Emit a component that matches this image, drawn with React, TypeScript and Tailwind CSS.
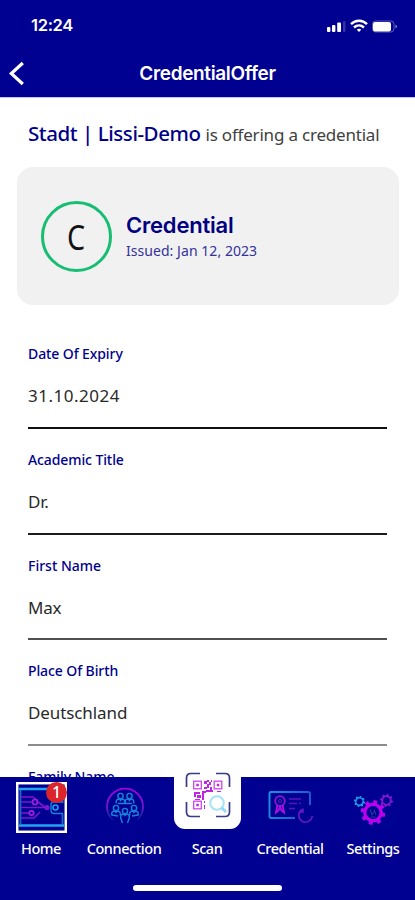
import type { ReactNode } from 'react';
import { cx } from 'class-variance-authority';

interface Field {
  label: string;
  value: string;
  labelClass: string;
  valueClass: string;
  lineClass: string;
}

const fields: Field[] = [
  { label: 'Date Of Expiry', value: '31.10.2024', labelClass: 'tracking-[-0.1px]', valueClass: 'tracking-[0.5px]', lineClass: 'border-[#101010]' },
  { label: 'Academic Title', value: 'Dr.', labelClass: 'tracking-[-0.1px]', valueClass: 'tracking-[-0.2px]', lineClass: 'border-[#1c1c1c]' },
  { label: 'First Name', value: 'Max', labelClass: 'tracking-[0px]', valueClass: 'tracking-[-0.2px]', lineClass: 'border-[#505050]' },
  { label: 'Place Of Birth', value: 'Deutschland', labelClass: 'tracking-[-0.1px]', valueClass: 'tracking-[-0.1px]', lineClass: 'border-[#8c8c8c]' },
  { label: 'Family Name', value: '', labelClass: 'tracking-[-0.1px]', valueClass: '', lineClass: 'border-[#8c8c8c]' },
];

const StatusBar = () => (
  <div className="flex h-[51px] items-center justify-between pl-[31px] pr-[16px]">
    <span className="font-['Inter','Liberation_Sans',sans-serif] text-[16.5px] font-semibold leading-none tracking-[-0.3px]">12:24</span>
    <svg width="73" height="16" viewBox="0 0 73 16" fill="none">
      <rect x="1" y="9" width="3.4" height="5" rx="1" fill="#fff" />
      <rect x="6" y="7" width="3.4" height="7" rx="1" fill="#fff" />
      <rect x="11.2" y="4.5" width="3.8" height="9.5" rx="1" fill="#fff" />
      <rect x="17" y="3" width="2.5" height="11" rx="1" fill="#fff" opacity="0.2" />
      <path d="M25 6.2C29.5 1.6 36.5 1.6 41 6.2M28 9.5C31 6.7 35 6.7 38 9.5" stroke="#fff" strokeWidth="2.4" />
      <path d="M30.8 11.7C32 10.5 34 10.5 35.2 11.7L33 14Z" fill="#fff" />
      <rect x="46.5" y="3" width="21.5" height="11" rx="3.2" stroke="#fff" opacity="0.35" />
      <rect x="47" y="4" width="18" height="9.5" rx="2" fill="#fff" />
      <path d="M69.5 6.5V10.5C71.7 9.5 71.7 7.5 69.5 6.5Z" fill="#fff" opacity="0.5" />
    </svg>
  </div>
);

const Header = () => (
  <header className="h-[97px] shrink-0 bg-[#000091] text-white">
    <StatusBar />
    <div className="grid h-[46px] grid-cols-[40px_1fr_40px] items-center">
      <svg className="ml-[8px]" width="18" height="26" viewBox="0 0 18 26" fill="none">
        <path d="M14.8 2L3.3 12.5L14.8 23" stroke="#fff" strokeWidth="3.2" />
      </svg>
      <h1 className="pt-px text-center font-['Inter','Liberation_Sans',sans-serif] text-[19px] font-semibold tracking-[-0.35px]">CredentialOffer</h1>
    </div>
  </header>
);

const CredentialCard = () => (
  <section className="ml-[17px] flex h-[138px] w-[382px] shrink-0 items-center rounded-[16px] bg-[#f1f1f1] pl-[24px]">
    <div className="flex size-[71px] items-center justify-center rounded-full border-3 border-[#17bd72] text-[35px] leading-none text-[#111]">
      <span className="block scale-x-[0.82]">C</span>
    </div>
    <div className="ml-[14px] pt-px text-[#000080]">
      <h2 className="font-['Inter','Liberation_Sans',sans-serif] text-[22px] font-semibold leading-[27px] tracking-[-0.2px]">Credential</h2>
      <p className="text-[14px] leading-[23px] tracking-[0.05px] text-[#33339a]">Issued: Jan 12, 2023</p>
    </div>
  </section>
);

const FieldRow = ({ label, value, labelClass, valueClass, lineClass }: Field) => (
  <div className={cx('flex h-[105.7px] w-[359px] shrink-0 flex-col border-b-2', lineClass)}>
    <p className={cx('mt-[21px] text-[14px] font-medium leading-[20px] text-[#00008c]', labelClass)}>{label}</p>
    <p className={cx('mt-[20px] text-[17px] leading-[24px] text-[#292929]', valueClass)}>{value}</p>
  </div>
);

const HomeIcon = () => (
  <svg width="51" height="51" viewBox="0 0 51 51" fill="none">
    <rect x="1.2" y="1.2" width="48.6" height="48.6" stroke="#fff" strokeWidth="2.5" />
    <path d="M3 7H48M3 43.5H48" stroke="#20a5f0" strokeWidth="2.5" />
    <path d="M4.5 8V42M46.5 8V21M46.5 32V42" stroke="#1c69c8" strokeWidth="1.8" />
    <path d="M5 15H17L22 19M5 20H16M5 25.5H29M5 31H13M5 36H18L24 30M22 20L29 25" stroke="#7d14d0" strokeWidth="1.6" />
    <circle cx="19" cy="20" r="2.5" stroke="#a51de5" strokeWidth="1.7" />
    <circle cx="15.5" cy="31" r="2.2" stroke="#a51de5" strokeWidth="1.7" />
    <circle cx="31" cy="25.5" r="2.6" fill="#7d18d2" />
    <path d="M47 20H37Q35 20 35 23V28Q35 31.5 38 31.5H47" stroke="#1681d6" strokeWidth="1.4" />
    <circle cx="39.5" cy="25.5" r="2.5" stroke="#169ff0" strokeWidth="1.6" />
  </svg>
);

const Person = ({ x, y }: { x: number; y: number }) => (
  <g transform={`translate(${x} ${y})`}>
    <circle r="2.6" />
    <path d="M-4.3 7.5V6C-4.3 3.8-2.5 3-1 3L0 4.5L1 3C2.5 3 4.3 3.8 4.3 6V7.5" />
  </g>
);

const ConnectionIcon = () => (
  <svg width="40" height="40" viewBox="0 0 40 40" fill="none">
    <defs>
      <linearGradient id="ring" x2="0" y2="1">
        <stop stopColor="#a800e4" />
        <stop offset=".65" stopColor="#6a1cc8" />
        <stop offset="1" stopColor="#234fc2" stopOpacity=".2" />
      </linearGradient>
    </defs>
    <path d="M8 33A18 18 0 1 1 32 33" stroke="url(#ring)" strokeWidth="1.8" />
    <g stroke="#1681db" strokeWidth="1.4">
      <Person x={15.5} y={9} />
      <Person x={24.5} y={9} />
      <Person x={11} y={21} />
      <Person x={29} y={21} />
      <Person x={20} y={24} />
      <path d="M7 28L13 29M33 28L27 29M15.7 31L17.5 36M24.3 31L22.5 36M13 16.5H27" />
    </g>
  </svg>
);

const ScanIcon = () => (
  <svg width="46" height="46" viewBox="0 0 46 46" fill="none">
    <path d="M15 1.5H6Q1.5 1.5 1.5 6V15M31 1.5H40Q44.5 1.5 44.5 6V15M1.5 30V40Q1.5 44.5 6 44.5H15M31 44.5H40Q44.5 44.5 44.5 40V30" stroke="#39398a" strokeWidth="1.7" />
    <g stroke="#d143ef" strokeWidth="1.3">
      <rect x="8.7" y="9.2" width="7.6" height="7.6" />
      <rect x="29.2" y="9.2" width="7.6" height="7.6" />
      <rect x="8.7" y="29.2" width="7.6" height="7.6" />
    </g>
    <g fill="#bf25e2">
      <path d="M11.3 11.8h2.5v2.5h-2.5zM31.8 11.8h2.5v2.5h-2.5zM11.3 31.8h2.5v2.5h-2.5z" />
      <path d="M19 9h3v3h-3zM22 12h2v4h-2zM24 10h2v3h-2zM19 15h3v2h-3zM25 15h2v3h-2zM22 8h2v2h-2zM21 18h7v2h-7zM32 19h4v1h-4zM26 8h1v2h-1z" />
      <path d="M9 20h6v2H9zM9 22h2v3h-2zM12 23h4v3h-4zM17 19h2v9h-2zM10 27h5v1h-5zM19 19h2v2h-2zM19 29h1v2h-1zM19 33h1v4h-1z" />
    </g>
    <circle cx="32" cy="31" r="6.8" stroke="#a5e4f5" strokeWidth="2" />
    <path d="M36.5 35.5L41 40" stroke="#8cdcf3" strokeWidth="2.6" />
  </svg>
);

const CredentialIcon = () => (
  <svg width="46" height="34" viewBox="0 1 46 34" fill="none">
    <defs>
      <linearGradient id="card" x2="1" y2="0.3">
        <stop stopColor="#1593e4" />
        <stop offset="1" stopColor="#2058cd" />
      </linearGradient>
    </defs>
    <path d="M27 29H3Q1.5 29 1.5 27V5Q1.5 3 3 3H40Q42 3 42 5V16" stroke="url(#card)" strokeWidth="2" />
    <circle cx="12" cy="12" r="4.8" stroke="#8d18d6" strokeWidth="1.8" />
    <circle cx="12" cy="12" r="1.5" stroke="#6419c2" />
    <path d="M9.5 16L8 23.5L10.5 21.5L12 18L13.5 21.5L16 23.5L14.5 16" stroke="#b410e8" strokeWidth="1.8" />
    <path d="M21 10H33M21 14.5H29M21 19.5H27M31 14.5H33" stroke="#5716b8" strokeWidth="1.5" />
    <path d="M34 20.5A6.8 6.8 0 1 0 44.3 27M31.5 23H35V19.5" stroke="#6c18c3" strokeWidth="1.5" />
  </svg>
);

const teeth = [0, 45, 90, 135, 180, 225, 270, 315];

const Gear = ({ x, y, r, color }: { x: number; y: number; r: number; color: string }) => (
  <g transform={`translate(${x} ${y}) rotate(12)`} stroke={color}>
    <circle r={r} strokeWidth={r * 0.4} />
    {teeth.map((angle) => (
      <path key={angle} d={`M0 ${-r}V${-r * 1.5}`} transform={`rotate(${angle})`} strokeWidth={r * 0.48} />
    ))}
  </g>
);

const SettingsIcon = () => (
  <svg width="40" height="36" viewBox="0 0 40 36" fill="none">
    <Gear x={5.5} y={12.5} r={3.7} color="#1ba2ee" />
    <Gear x={32.5} y={11.5} r={4.3} color="#8a16d4" />
    <Gear x={19} y={23.5} r={8.2} color="#bb00f0" />
    <path d="M16 20.5L18 26L20.5 21.5L22 26M17 28H21.5" stroke="#28379f" strokeWidth="1.1" />
  </svg>
);

interface TabProps {
  label: string;
  children: ReactNode;
}

const Tab = ({ label, children }: TabProps) => (
  <button className="flex min-w-0 flex-col items-center">
    <span className="flex h-[60px] items-center justify-center">{children}</span>
    <span className="-ml-px whitespace-nowrap text-[14.5px] font-medium leading-[22px] tracking-[-0.45px]">{label}</span>
  </button>
);

const TabBar = () => (
  <nav className="h-[123px] shrink-0 bg-[#000091] text-white">
    <div className="grid h-[84px] grid-cols-5">
      <Tab label="Home">
        <span className="relative">
          <HomeIcon />
          <span className="absolute right-0 top-0 flex size-[21px] items-center justify-center rounded-full bg-[#d9252b] text-[16px] font-medium">1</span>
        </span>
      </Tab>
      <Tab label="Connection"><ConnectionIcon /></Tab>
      <Tab label="Scan">
        <span className="-mt-[18px] flex h-[62px] w-[67px] items-center justify-center rounded-b-[11px] bg-white pb-[6px]"><ScanIcon /></span>
      </Tab>
      <Tab label="Credential"><CredentialIcon /></Tab>
      <Tab label="Settings"><SettingsIcon /></Tab>
    </div>
    <div className="mx-auto mt-[24px] h-[6px] w-[149px] rounded-full bg-white" />
  </nav>
);

const App = () => (
  <div className="flex h-[900px] w-[415px] flex-col overflow-hidden bg-white font-['Noto_Sans','Open_Sans',sans-serif]">
    <Header />
    <main className="flex min-h-0 flex-1 flex-col overflow-hidden border-t border-[#c5c5ef]">
      <p className="flex h-[69px] shrink-0 items-baseline whitespace-nowrap pl-[28px] pt-[20px]">
        <span className="text-[20.5px] font-medium tracking-[-0.45px] text-[#00008a]">Stadt | Lissi-Demo</span>
        <span className="ml-[5px] text-[17px] tracking-[-0.2px] text-[#404040]">is offering a credential</span>
      </p>
      <CredentialCard />
      <div className="ml-[28px] mt-[18.4px] flex flex-col">
        {fields.map((field) => <FieldRow key={field.label} {...field} />)}
      </div>
    </main>
    <TabBar />
  </div>
);

export default App;
